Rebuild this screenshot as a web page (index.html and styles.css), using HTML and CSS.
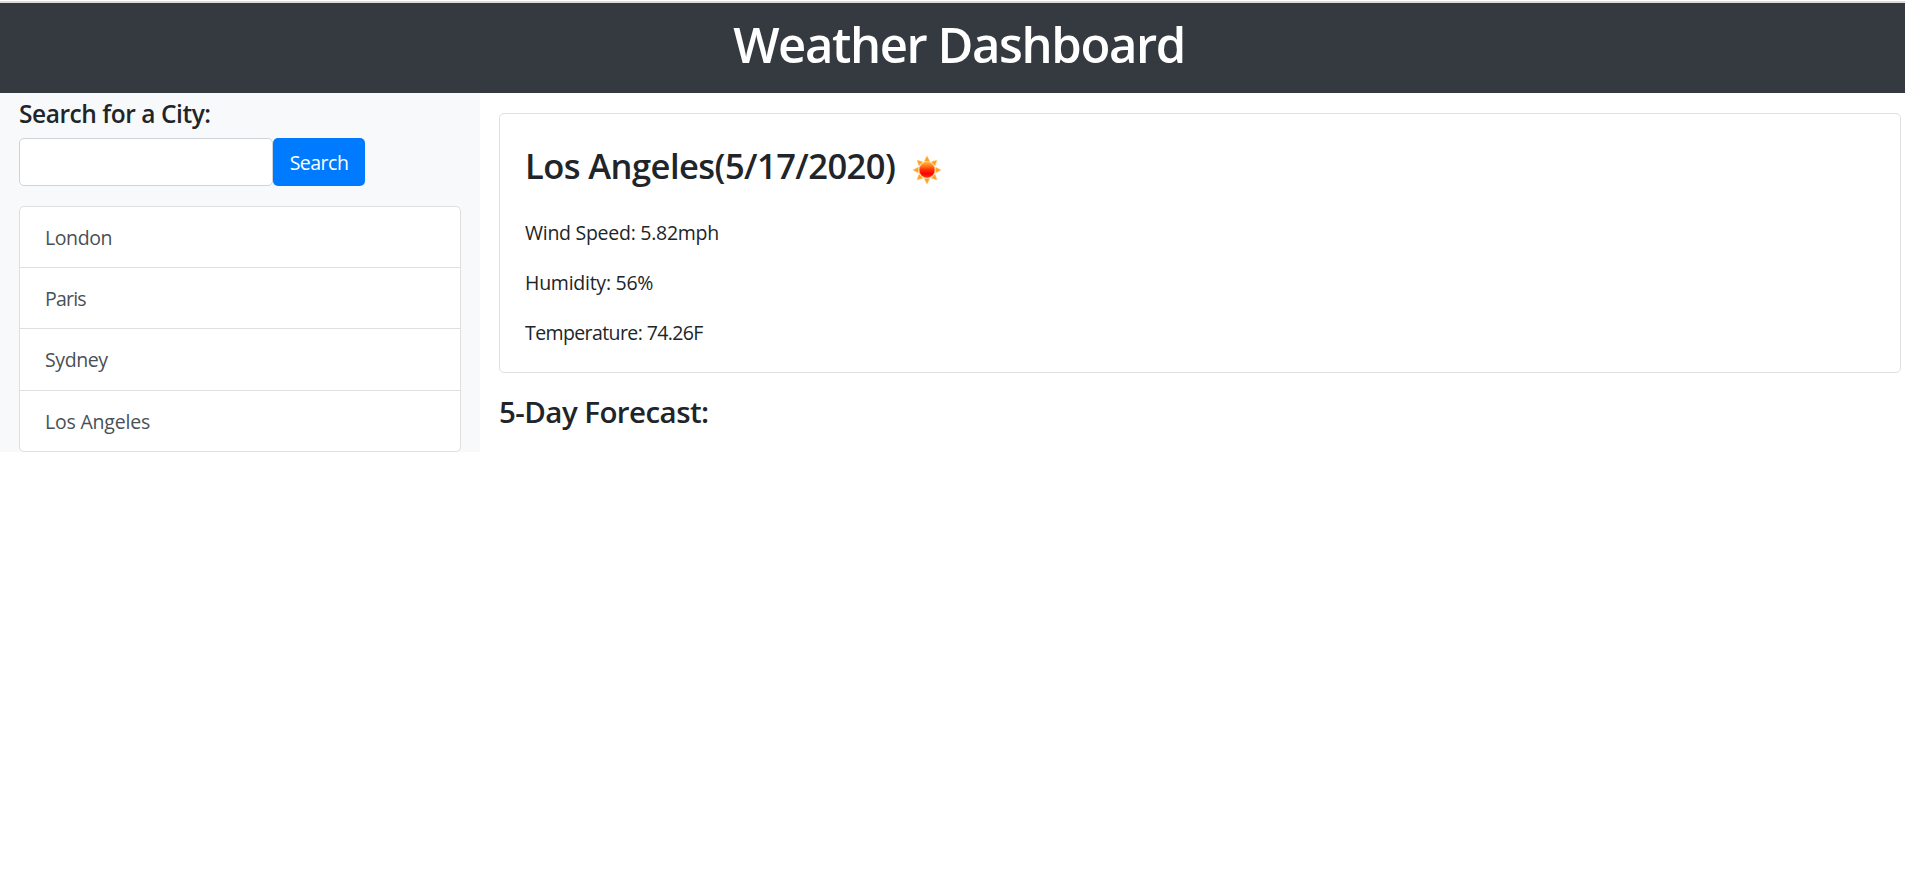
FILE: index.html
```html
<!DOCTYPE html>
<html lang="en">
<head>
<meta charset="utf-8">
<title>Weather Dashboard</title>
<link rel="stylesheet" href="styles.css">
</head>
<body>
<header class="header"><h1 class="title"><span>Weather Dashboard</span></h1></header>
<div class="layout">
  <aside class="sidebar">
    <h5 class="search-title"><span>Search for a City:</span></h5>
    <form class="search-form">
      <input class="search-input" type="text" aria-label="City">
      <button class="search-button" type="button">Search</button>
    </form>
    <ul class="cities">
      <li class="city">London</li>
      <li class="city paris">Paris</li>
      <li class="city">Sydney</li>
      <li class="city los-angeles">Los Angeles</li>
    </ul>
  </aside>
  <main class="main">
    <section class="card">
      <h2 class="card-title"><span>Los Angeles(5/17/2020)</span>
        <svg class="sun" viewBox="0 0 30 30" aria-hidden="true">
          <defs>
            <linearGradient id="sun-core" x1="0" y1="0" x2="0" y2="1">
              <stop offset="0" stop-color="#ffb62e"/>
              <stop offset=".2" stop-color="#ff8a1c"/>
              <stop offset=".5" stop-color="#ff2a05"/>
              <stop offset=".75" stop-color="#ff0000"/>
              <stop offset="1" stop-color="#ff3a10"/>
            </linearGradient>
            <path id="ray" d="M15 .8 17.9 6.4h-5.8z"/>
          </defs>
          <g fill="#ffa022" stroke="#ffd596" stroke-width=".5">
            <use href="#ray"/>
            <use href="#ray" transform="rotate(45 15 15)"/>
            <use href="#ray" transform="rotate(90 15 15)"/>
            <use href="#ray" transform="rotate(135 15 15)"/>
            <use href="#ray" transform="rotate(180 15 15)"/>
            <use href="#ray" transform="rotate(225 15 15)"/>
            <use href="#ray" transform="rotate(270 15 15)"/>
            <use href="#ray" transform="rotate(315 15 15)"/>
          </g>
          <circle cx="15" cy="15" r="7.9" fill="url(#sun-core)" stroke="#ffa94a" stroke-width=".7"/>
        </svg>
      </h2>
      <p class="stat wind">Wind Speed: 5.82mph</p>
      <p class="stat humidity">Humidity: 56%</p>
      <p class="stat temperature">Temperature: 74.26F</p>
    </section>
    <h3 class="forecast-title"><span>5-Day Forecast:</span></h3>
  </main>
</div>
</body>
</html>
```
FILE: styles.css
```css
*, *::before, *::after { box-sizing: border-box; }
body {
  margin: 0;
  padding-top: 1px;
  background: #fff;
  color: #212529;
  font: 400 19.5px/30px "Open Sans", "Noto Sans", sans-serif;
}
h1, h2, h3, h5, p, ul { margin: 0; padding: 0; font-weight: 600; }
.header {
  height: 92px;
  border-top: 2px solid #dbdcde;
  background: #343a40;
  color: #fff;
  text-align: center;
  padding-left: 13px;
}
.title { font-size: 49px; line-height: 82px; letter-spacing: -1.4px; }
.layout { display: flex; align-items: flex-start; }
.sidebar {
  width: 480px;
  height: 359px;
  padding: 6px 19px 0;
  background: #f8f9fa;
}
.search-title { font-size: 24.5px; line-height: 30px; letter-spacing: -0.45px; margin-bottom: 9px; }
.search-form { display: flex; height: 48px; margin-bottom: 20px; }
.search-input {
  width: 254px;
  border: 1px solid #ced4da;
  border-radius: 5px;
  background: #fff;
  padding: 8px 15px;
  font: inherit;
}
.search-button {
  width: 92px;
  border: 0;
  border-radius: 5px;
  background: #007bff;
  color: #fff;
  padding: 2px 0 0;
  font: inherit;
  letter-spacing: -0.5px;
}
.cities {
  height: 246px;
  display: grid;
  grid-template-rows: 61px 61px 62px 60px;
  border: 1px solid #dfdfdf;
  border-radius: 5px;
  background: #fff;
  list-style: none;
  font-weight: 400;
}
.city {
  padding: 16px 25px 0;
  color: #495057;
  letter-spacing: -0.4px;
}
.city:not(:last-child) { border-bottom: 1px solid #dfdfdf; }
.paris { letter-spacing: -0.8px; }
.los-angeles { letter-spacing: -0.2px; }
.main { flex: 1; padding: 20px 4px 0 19px; }
.card {
  height: 260px;
  border: 1px solid #dfdfdf;
  border-radius: 5px;
  padding: 26px 25px 24px;
}
.card-title {
  display: flex;
  align-items: center;
  gap: 17px;
  font-size: 34.5px;
  line-height: 52px;
  letter-spacing: -0.55px;
  margin-bottom: 26px;
}
.sun { width: 30px; height: 30px; margin-top: 7px; }
.stat { font-weight: 400; margin-bottom: 20px; }
.wind { letter-spacing: -0.27px; }
.humidity { letter-spacing: -0.25px; }
.temperature { letter-spacing: -0.6px; }
.forecast-title { margin-top: 21px; font-size: 29.5px; line-height: 36px; letter-spacing: -0.55px; }
```
